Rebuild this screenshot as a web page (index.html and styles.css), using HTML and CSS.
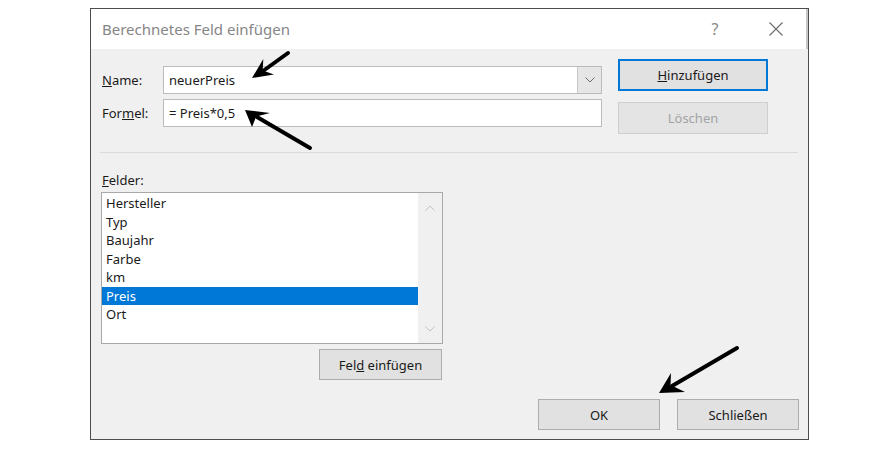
FILE: index.html
```html
<!DOCTYPE html>
<html lang="de">
<head>
    <meta charset="UTF-8">
    <title>Berechnetes Feld einfügen</title>
    <link rel="stylesheet" href="styles.css">
</head>
<body>
    <div class="dialog">
        <div class="titlebar">
            <span class="title">Berechnetes Feld einfügen</span>
            <span class="help">?</span>
            <svg class="close" width="14" height="14" viewBox="0 0 14 14">
                <path d="M0.5 0.5 L13.5 13.5 M13.5 0.5 L0.5 13.5" stroke="#6b6b6b" stroke-width="1.1" fill="none"/>
            </svg>
        </div>

        <div class="content">
            <div class="top">
                <div class="fields">
                    <div class="row">
                        <label><u>N</u>ame:</label>
                        <div class="combo">
                            <span>neuerPreis</span>
                            <span class="drop">
                                <svg width="10" height="6" viewBox="0 0 10 6"><path d="M0.5 0.5 L5 5 L9.5 0.5" stroke="#6e6e6e" fill="none"/></svg>
                            </span>
                        </div>
                    </div>
                    <div class="row">
                        <label>For<u>m</u>el:</label>
                        <div class="text-input">= Preis*0,5</div>
                    </div>
                </div>
                <div class="side">
                    <button class="btn btn-side btn-default"><u>H</u>inzufügen</button>
                    <button class="btn btn-side btn-disabled">Löschen</button>
                </div>
            </div>

            <div class="sep"></div>

            <div class="caption"><u>F</u>elder:</div>
            <div class="listbox">
                <ul class="list">
                    <li>Hersteller</li>
                    <li>Typ</li>
                    <li>Baujahr</li>
                    <li>Farbe</li>
                    <li>km</li>
                    <li class="selected">Preis</li>
                    <li>Ort</li>
                </ul>
                <div class="scroll">
                    <svg width="10" height="6" viewBox="0 0 10 6"><path d="M0.5 5.5 L5 1 L9.5 5.5" stroke="#c2c2c2" fill="none"/></svg>
                    <svg width="10" height="6" viewBox="0 0 10 6"><path d="M0.5 0.5 L5 5 L9.5 0.5" stroke="#c2c2c2" fill="none"/></svg>
                </div>
            </div>
            <button class="btn btn-insert">Fel<u>d</u> einfügen</button>

            <div class="footer">
                <button class="btn btn-ok">OK</button>
                <button class="btn btn-close">Schließen</button>
            </div>
        </div>
    </div>

    <!-- annotation arrows drawn over the screenshot -->
    <svg class="arrows" width="882" height="456" viewBox="0 0 882 456">
        <g stroke="#000" stroke-width="4" stroke-linecap="round">
            <line x1="288" y1="53" x2="263" y2="71"/>
            <line x1="310" y1="148" x2="257" y2="117"/>
            <line x1="737" y1="348" x2="672" y2="386"/>
        </g>
        <g fill="#000">
            <polygon points="252,78 263.3,59 262.7,70.6 274,74.5"/>
            <polygon points="245,110 252,127 256.2,116.6 270,113"/>
            <polygon points="659,393 671,373 670.5,385 685,392"/>
        </g>
    </svg>
</body>
</html>
```

FILE: styles.css
```css
* {
    box-sizing: border-box;
}

body {
    margin: 0;
    background: #fff;
    font-family: "Noto Sans", "Segoe UI", sans-serif;
    font-size: 13px;
    color: #1a1a1a;
    position: relative;
    height: 456px;
    overflow: hidden;
}

.dialog {
    margin: 8px 0 0 90px;
    width: 719px;
    height: 432px;
    border: 1px solid #4d4d4d;
    background: #f0f0f0;
    display: flex;
    flex-direction: column;
}

.titlebar {
    height: 40px;
    flex-shrink: 0;
    background: #fff;
    display: flex;
    align-items: center;
    box-shadow: inset -2px 0 0 #c8c8c8;
}

.title {
    flex: 1;
    margin-left: 11px;
    font-size: 15px;
    color: #868686;
}

.help {
    width: 20px;
    margin-right: 44px;
    text-align: center;
    font-size: 16px;
    color: #8a8a8a;
}

.close {
    margin-right: 25px;
}

.content {
    flex: 1;
    padding: 0 9px 9px 10px;
    display: flex;
    flex-direction: column;
}

.top {
    display: flex;
    align-items: flex-start;
}

.fields {
    margin-top: 17px;
    display: flex;
    flex-direction: column;
    gap: 5px;
}

.row {
    display: flex;
    align-items: center;
    height: 28px;
}

.row label {
    width: 62px;
    padding-left: 1px;
}

.combo,
.text-input {
    width: 439px;
    height: 28px;
    border: 1px solid #bcbcbc;
    background: #fff;
    display: flex;
    align-items: center;
    padding-left: 5px;
}

.drop {
    margin-left: auto;
    width: 24px;
    height: 26px;
    background: #e6e6e6;
    border-left: 1px solid #c6c6c6;
    display: flex;
    align-items: center;
    justify-content: center;
}

.side {
    margin-left: 16px;
    margin-top: 10px;
    display: flex;
    flex-direction: column;
    gap: 11px;
}

.btn {
    font: inherit;
    color: #1a1a1a;
    background: #e1e1e1;
    border: 1px solid #adadad;
    padding: 0;
}

.btn-side {
    width: 150px;
    height: 32px;
}

.btn-default {
    border: 2px solid #0078d7;
}

.btn-disabled {
    color: #a3a3a3;
    background: #e4e4e4;
    border-color: #cfcfcf;
}

.sep {
    margin: 18px 0 0 -1px;
    width: 698px;
    height: 1px;
    background: #dadada;
}

.caption {
    margin-top: 19px;
    line-height: 16px;
    padding-left: 1px;
}

.listbox {
    margin-top: 4px;
    width: 342px;
    height: 152px;
    border: 1px solid #a8a8a8;
    background: #fff;
    display: flex;
}

.list {
    flex: 1;
    list-style: none;
    margin: 0;
    padding: 1px 0 0;
}

.list li {
    line-height: 18.5px;
    height: 18.5px;
    padding-left: 4px;
}

.list li.selected {
    background: #0078d7;
    color: #fff;
}

.scroll {
    width: 24px;
    background: #f0f0f0;
    display: flex;
    flex-direction: column;
    align-items: center;
    justify-content: space-between;
    padding: 12px 0 11px;
}

.btn-insert {
    align-self: flex-start;
    margin: 5px 0 0 218px;
    width: 123px;
    height: 31px;
}

.footer {
    margin-top: auto;
    display: flex;
    justify-content: flex-end;
    gap: 17px;
}

.btn-ok,
.btn-close {
    width: 122px;
    height: 31px;
}

.arrows {
    position: absolute;
    top: 0;
    left: 0;
    pointer-events: none;
}
```
